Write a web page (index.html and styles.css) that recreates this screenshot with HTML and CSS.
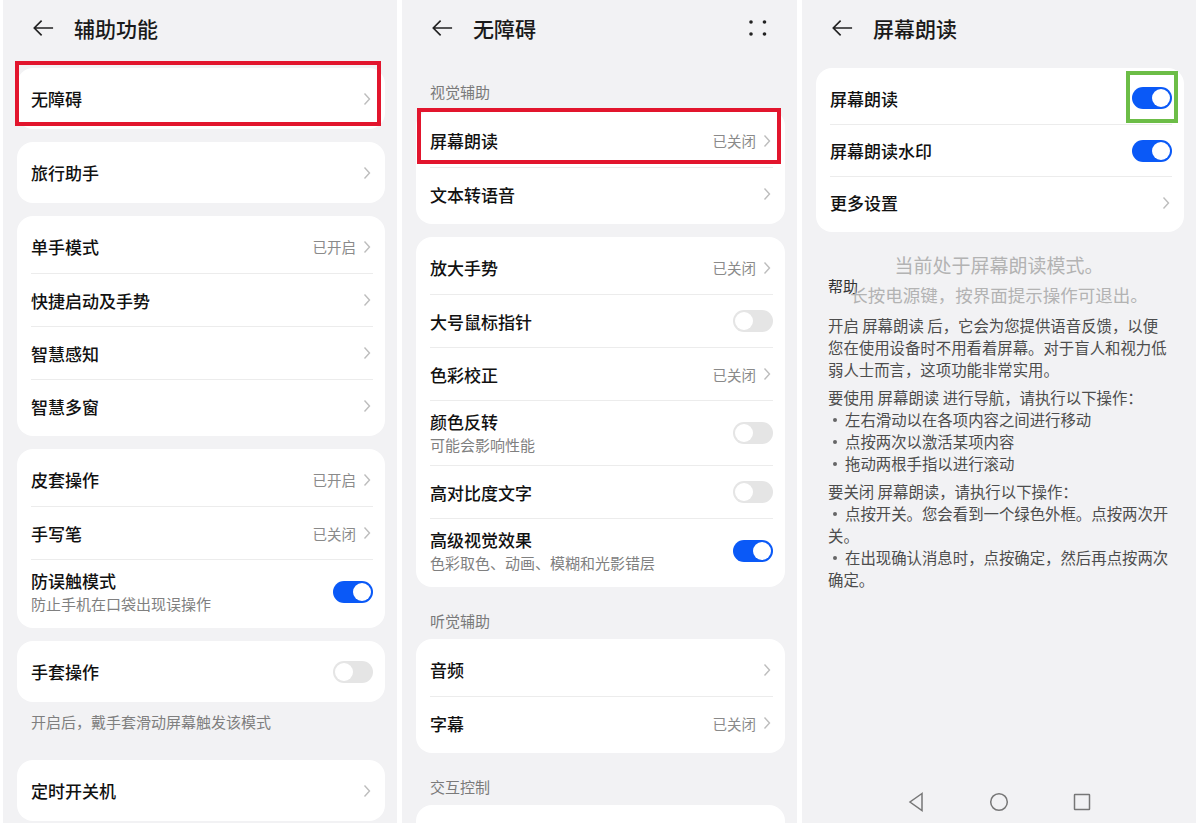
FILE: index.html
```html
<!DOCTYPE html>
<html lang="zh-CN">
<head>
    <meta charset="UTF-8">
    <meta name="viewport" content="width=device-width, initial-scale=1.0">
    <title>辅助功能 - 无障碍 - 屏幕朗读</title>
    <link rel="stylesheet" href="styles.css">
</head>
<body>

  <!-- screen 1 -->
  <div class="screen s1">
    <div class="topbar">
      <svg class="back" viewBox="0 0 24 20"><path d="M23 10H2.5M10.5 2L2.5 10l8 8"/></svg>
      <h1>辅助功能</h1>
    </div>

    <div class="card">
      <div class="row"><span>无障碍</span><span class="more"><svg class="chev" viewBox="0 0 8 14"><path d="M1.5 1.5l5 5.5-5 5.5"/></svg></span></div>
      <div class="mark red m1"></div>
    </div>

    <div class="card">
      <div class="row"><span>旅行助手</span><span class="more"><svg class="chev" viewBox="0 0 8 14"><path d="M1.5 1.5l5 5.5-5 5.5"/></svg></span></div>
    </div>

    <div class="card">
      <div class="row"><span>单手模式</span><span class="more">已开启<svg class="chev" viewBox="0 0 8 14"><path d="M1.5 1.5l5 5.5-5 5.5"/></svg></span></div>
      <div class="row"><span>快捷启动及手势</span><span class="more"><svg class="chev" viewBox="0 0 8 14"><path d="M1.5 1.5l5 5.5-5 5.5"/></svg></span></div>
      <div class="row"><span>智慧感知</span><span class="more"><svg class="chev" viewBox="0 0 8 14"><path d="M1.5 1.5l5 5.5-5 5.5"/></svg></span></div>
      <div class="row"><span>智慧多窗</span><span class="more"><svg class="chev" viewBox="0 0 8 14"><path d="M1.5 1.5l5 5.5-5 5.5"/></svg></span></div>
    </div>

    <div class="card">
      <div class="row"><span>皮套操作</span><span class="more">已开启<svg class="chev" viewBox="0 0 8 14"><path d="M1.5 1.5l5 5.5-5 5.5"/></svg></span></div>
      <div class="row"><span>手写笔</span><span class="more">已关闭<svg class="chev" viewBox="0 0 8 14"><path d="M1.5 1.5l5 5.5-5 5.5"/></svg></span></div>
      <div class="row tall">
        <div class="txt"><div>防误触模式</div><div class="sub">防止手机在口袋出现误操作</div></div>
        <span class="switch on"></span>
      </div>
    </div>

    <div class="card">
      <div class="row"><span>手套操作</span><span class="switch"></span></div>
    </div>
    <div class="note">开启后，戴手套滑动屏幕触发该模式</div>

    <div class="card">
      <div class="row"><span>定时开关机</span><span class="more"><svg class="chev" viewBox="0 0 8 14"><path d="M1.5 1.5l5 5.5-5 5.5"/></svg></span></div>
    </div>
  </div>

  <!-- screen 2 -->
  <div class="screen s2">
    <div class="topbar">
      <svg class="back" viewBox="0 0 24 20"><path d="M23 10H2.5M10.5 2L2.5 10l8 8"/></svg>
      <h1>无障碍</h1>
      <svg class="dots" viewBox="0 0 18 16"><circle cx="2" cy="2" r="1.8"/><circle cx="15.5" cy="2" r="1.8"/><circle cx="2" cy="14" r="1.8"/><circle cx="15.5" cy="14" r="1.8"/></svg>
    </div>

    <div class="label first">视觉辅助</div>
    <div class="card">
      <div class="row"><span>屏幕朗读</span><span class="more">已关闭<svg class="chev" viewBox="0 0 8 14"><path d="M1.5 1.5l5 5.5-5 5.5"/></svg></span></div>
      <div class="row"><span>文本转语音</span><span class="more"><svg class="chev" viewBox="0 0 8 14"><path d="M1.5 1.5l5 5.5-5 5.5"/></svg></span></div>
      <div class="mark red m2"></div>
    </div>

    <div class="card">
      <div class="row"><span>放大手势</span><span class="more">已关闭<svg class="chev" viewBox="0 0 8 14"><path d="M1.5 1.5l5 5.5-5 5.5"/></svg></span></div>
      <div class="row"><span>大号鼠标指针</span><span class="switch"></span></div>
      <div class="row"><span>色彩校正</span><span class="more">已关闭<svg class="chev" viewBox="0 0 8 14"><path d="M1.5 1.5l5 5.5-5 5.5"/></svg></span></div>
      <div class="row tall">
        <div class="txt"><div>颜色反转</div><div class="sub">可能会影响性能</div></div>
        <span class="switch"></span>
      </div>
      <div class="row"><span>高对比度文字</span><span class="switch"></span></div>
      <div class="row tall">
        <div class="txt"><div>高级视觉效果</div><div class="sub">色彩取色、动画、模糊和光影错层</div></div>
        <span class="switch on"></span>
      </div>
    </div>

    <div class="label">听觉辅助</div>
    <div class="card">
      <div class="row"><span>音频</span><span class="more"><svg class="chev" viewBox="0 0 8 14"><path d="M1.5 1.5l5 5.5-5 5.5"/></svg></span></div>
      <div class="row"><span>字幕</span><span class="more">已关闭<svg class="chev" viewBox="0 0 8 14"><path d="M1.5 1.5l5 5.5-5 5.5"/></svg></span></div>
    </div>

    <div class="label">交互控制</div>
    <div class="card empty"></div>
  </div>

  <!-- screen 3 -->
  <div class="screen s3">
    <div class="topbar">
      <svg class="back" viewBox="0 0 24 20"><path d="M23 10H2.5M10.5 2L2.5 10l8 8"/></svg>
      <h1>屏幕朗读</h1>
    </div>

    <div class="card">
      <div class="row"><span>屏幕朗读</span><span class="switch on"><span class="mark green"></span></span></div>
      <div class="row"><span>屏幕朗读水印</span><span class="switch on"></span></div>
      <div class="row"><span>更多设置</span><span class="more"><svg class="chev" viewBox="0 0 8 14"><path d="M1.5 1.5l5 5.5-5 5.5"/></svg></span></div>
    </div>

    <div class="help">
      <div class="help-title">帮助</div>
      <p>开启 屏幕朗读 后，它会为您提供语音反馈，以便您在使用设备时不用看着屏幕。对于盲人和视力低弱人士而言，这项功能非常实用。</p>
      <p>要使用 屏幕朗读 进行导航，请执行以下操作：
        <span class="li"><span class="dot"></span>左右滑动以在各项内容之间进行移动</span>
        <span class="li"><span class="dot"></span>点按两次以激活某项内容</span>
        <span class="li"><span class="dot"></span>拖动两根手指以进行滚动</span>
      </p>
      <p>要关闭 屏幕朗读，请执行以下操作：
        <span class="li"><span class="dot"></span>点按开关。您会看到一个绿色外框。点按两次开关。</span>
        <span class="li"><span class="dot"></span>在出现确认消息时，点按确定，然后再点按两次确定。</span>
      </p>
    </div>

    <div class="toast">
      <div class="t1">当前处于屏幕朗读模式。</div>
      <div class="t2">长按电源键，按界面提示操作可退出。</div>
    </div>

    <div class="navbar">
      <svg viewBox="0 0 20 20"><path d="M16 1.5L4 10l12 8.5z"/></svg>
      <svg viewBox="0 0 20 20"><circle cx="10" cy="10" r="8.3"/></svg>
      <svg viewBox="0 0 20 20"><rect x="2.5" y="2.5" width="15" height="15" rx="0.5"/></svg>
    </div>
  </div>

</body>
</html>
```

FILE: styles.css
```css
body{
  margin: 0;
  padding: 0 0 0 3px;
  background: #fff;
  display: flex;
  gap: 5px;
  font-family: "Noto Sans CJK SC", "Noto Sans", sans-serif;
  color: #111;
}
.screen{
  width: 394px;
  height: 823px;
  flex-shrink: 0;
  background: #f2f2f4;
  overflow: hidden;
  display: flex;
  flex-direction: column;
  position: relative;
}
.screen > *{
  flex-shrink: 0;
}
.s2{
  width: 395px;
}

/* header */
.topbar{
  height: 56px;
  display: flex;
  align-items: center;
  padding: 0 30px 0 29px;
  margin-bottom: 12px;
}
.s2 .topbar{
  margin-bottom: 0;
}
.back{
  width: 22px;
  height: 20px;
  margin-right: 20px;
  fill: none;
  stroke: #222;
  stroke-width: 1.8;
}
h1{
  margin: 0;
  font-size: 21px;
  font-weight: 500;
  color: #1a1a1a;
}
.dots{
  margin-left: auto;
  width: 18px;
  height: 16px;
  fill: #222;
}

/* cards and rows */
.card{
  position: relative;
  background: #fff;
  border-radius: 16px;
  padding: 4px 0;
  margin: 0 12px 13px 14px;
}
.card.empty{
  height: 60px;
}
.row{
  height: 53px;
  margin: 0 12px 0 14px;
  border-top: 1px solid #ececec;
  display: flex;
  align-items: center;
  justify-content: space-between;
  font-size: 17px;
  font-weight: 500;
  box-sizing: border-box;
}
.s3 .row{
  height: 52px;
}
.row:first-child{
  border-top: none;
}
.row.tall{
  height: 65px;
}
.txt{
  line-height: 22px;
}
.sub{
  margin-top: 2px;
  font-size: 15px;
  font-weight: 400;
  line-height: 20px;
  color: #808080;
}
.more{
  display: flex;
  align-items: center;
  gap: 7px;
  font-size: 14.5px;
  font-weight: 400;
  color: #8a8a8a;
  padding-right: 2px;
}
.chev{
  width: 8px;
  height: 14px;
  fill: none;
  stroke: #bdbdbd;
  stroke-width: 1.4;
}

/* switches */
.switch{
  position: relative;
  width: 40px;
  height: 22px;
  border-radius: 11px;
  background: #e5e5e5;
  flex-shrink: 0;
}
.switch::after{
  content: "";
  position: absolute;
  top: 2px;
  left: 2px;
  width: 18px;
  height: 18px;
  border-radius: 50%;
  background: #fff;
}
.switch.on{
  background: #0a59f7;
}
.switch.on::after{
  left: 20px;
}

/* highlight frames drawn over the screenshot */
.mark{
  position: absolute;
  box-sizing: border-box;
}
.red{
  border: 4px solid #e2152d;
}
.m1{
  top: -7px;
  bottom: 3px;
  left: -2px;
  right: 4px;
}
.m2{
  top: -2px;
  height: 56px;
  left: 1px;
  right: 4px;
}
.green{
  border: 4px solid #6cbd47;
  top: -16px;
  bottom: -14px;
  left: -6px;
  right: -6px;
  z-index: 2;
}

/* labels & notes */
.label{
  padding: 11px 28px 8px;
  font-size: 15px;
  line-height: 20px;
  color: #7a7a7a;
}
.label.first{
  padding-top: 26px;
}
.note{
  padding: 0 28px;
  margin: -3px 0 28px;
  font-size: 15px;
  line-height: 20px;
  color: #7f7f7f;
}

/* help text */
.help{
  padding: 0 26px;
  width: 345px;
  font-size: 15.4px;
  line-height: 22px;
  color: #4d4d4d;
}
.help-title{
  padding-top: 31px;
  margin-bottom: 18px;
  font-size: 15px;
  line-height: 20px;
  color: #333;
}
.help p{
  margin: 0 0 6px;
}
.li{
  display: block;
}
.dot{
  display: inline-block;
  width: 4px;
  height: 4px;
  border-radius: 50%;
  background: #666;
  margin: 0 8px 3px 5px;
  vertical-align: middle;
}

.toast{
  position: absolute;
  top: 250px;
  left: 0;
  right: 0;
  text-align: center;
  line-height: 30px;
  color: #b3b3b3;
}
.t1{
  font-size: 19px;
}
.t2{
  font-size: 17.5px;
}

.navbar{
  margin-top: auto;
  height: 42px;
  display: flex;
  justify-content: center;
  align-items: center;
  gap: 63px;
}
.navbar svg{
  width: 20px;
  height: 20px;
  fill: none;
  stroke: #777;
  stroke-width: 1.5;
}
```
